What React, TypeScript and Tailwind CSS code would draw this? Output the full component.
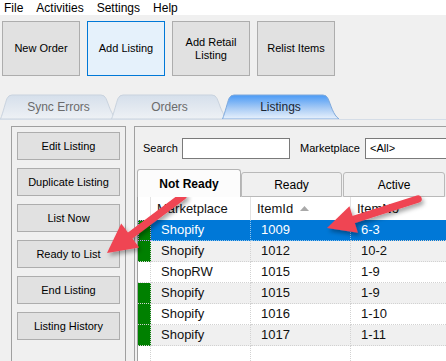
import React from 'react';

type Row = { market: string; id: string; item: string; flag: boolean };

const ROWS: Row[] = [
  { market: 'Shopify', id: '1009', item: '6-3', flag: true },
  { market: 'Shopify', id: '1012', item: '10-2', flag: true },
  { market: 'ShopRW', id: '1015', item: '1-9', flag: false },
  { market: 'Shopify', id: '1015', item: '1-9', flag: true },
  { market: 'Shopify', id: '1016', item: '1-10', flag: true },
  { market: 'Shopify', id: '1017', item: '1-11', flag: true },
];

const SIDE_BUTTONS = ['Edit Listing', 'Duplicate Listing', 'List Now', 'Ready to List', 'End Listing', 'Listing History'];

// Callout arrow: shaft line + triangular head, tip at (x2, y2).
function Arrow({ x1, y1, x2, y2, head = 28, half = 14 }: { x1: number; y1: number; x2: number; y2: number; head?: number; half?: number }) {
  const len = Math.hypot(x2 - x1, y2 - y1);
  const ux = (x2 - x1) / len;
  const uy = (y2 - y1) / len;
  const nx = -uy;
  const ny = ux;
  const bx = x2 - ux * head;
  const by = y2 - uy * head;
  const pts = [
    [bx + nx * half, by + ny * half],
    [x2, y2],
    [bx - nx * half, by - ny * half],
  ]
    .map((p) => p.join(','))
    .join(' ');
  return (
    <g filter="url(#shadow)">
      <line x1={x1} y1={y1} x2={bx + ux * 2} y2={by + uy * 2} stroke="#ef4452" strokeWidth={7.5} strokeLinecap="round" />
      <polygon points={pts} fill="#ef4452" />
    </g>
  );
}

function MainTab({ label, active }: { label: string; active?: boolean }) {
  const id = active ? 'tabOn' : 'tabOff';
  return (
    <div className="relative flex h-[25px] w-[111px] shrink-0 items-center justify-center">
      <svg className="absolute left-[-3px] top-0" width="118" height="25" viewBox="0 0 118 25">
        <path
          d="M0.5,25 C3,19 5.5,8 7,4.5 Q8.5,1 12,1 L101,1 Q104.5,1 106,4.5 C109,11 111,21 117,25 Z"
          fill={`url(#${id})`}
          stroke={active ? '#7ea9dc' : '#c9d3df'}
        />
      </svg>
      <span className={`relative text-[12px] ${active ? 'text-[#1b2633]' : 'text-[#6b6b6b]'}`}>{label}</span>
    </div>
  );
}

export default function App() {
  return (
    <div className="relative h-[361px] w-[446px] overflow-hidden bg-[#f0f0f0] font-['Liberation_Sans',Arial,sans-serif] text-black">
      <svg width="0" height="0" className="absolute">
        <defs>
          <linearGradient id="tabOff" x1="0" y1="0" x2="0" y2="1">
            <stop offset="0" stopColor="#d5dfeb" />
            <stop offset="1" stopColor="#eef1f5" />
          </linearGradient>
          <linearGradient id="tabOn" x1="0" y1="0" x2="0" y2="1">
            <stop offset="0" stopColor="#4a9af6" />
            <stop offset="0.55" stopColor="#a8cbf5" />
            <stop offset="1" stopColor="#e8f1fc" />
          </linearGradient>
        </defs>
      </svg>

      {/* menu bar */}
      <div className="flex h-[15px] items-center gap-[13px] bg-white pl-[4px] text-[12px] leading-none">
        <span>File</span>
        <span>Activities</span>
        <span>Settings</span>
        <span>Help</span>
      </div>

      {/* toolbar */}
      <div className="flex gap-[7px] pl-[2px] pt-[6px] text-[11px] leading-[13px]">
        <div className="flex h-[55px] w-[78px] items-center justify-center border border-[#adadad] bg-[#e1e1e1]">New Order</div>
        <div className="flex h-[55px] w-[78px] items-center justify-center border border-[#0078d7] bg-[#e5f1fb]">Add Listing</div>
        <div className="flex h-[55px] w-[78px] items-center justify-center border border-[#adadad] bg-[#e1e1e1] text-center">
          Add Retail
          <br />
          Listing
        </div>
        <div className="flex h-[55px] w-[78px] items-center justify-center border border-[#adadad] bg-[#e1e1e1]">Relist Items</div>
      </div>

      {/* main tabs */}
      <div className="mt-[18px] flex h-[25px] pl-[3px]">
        <MainTab label="Sync Errors" />
        <MainTab label="Orders" />
        <MainTab label="Listings" active />
      </div>
      <div className="h-px bg-[#d5dde7]" />

      <div className="mt-[6px] flex h-[235px]">
        {/* left command panel */}
        <div className="ml-[11px] flex w-[115px] shrink-0 flex-col gap-[8px] border-x border-t border-[#a0a0a0] px-[5px] pt-[5px]">
          {SIDE_BUTTONS.map((b) => (
            <div key={b} className="flex h-[28px] shrink-0 items-center justify-center border border-[#adadad] bg-[#e1e1e1] text-[11px]">
              {b}
            </div>
          ))}
        </div>

        {/* right panel */}
        <div className="ml-[8px] flex min-w-0 flex-1 flex-col overflow-hidden border-l border-t border-[#a0a0a0]">
          <div className="mt-[11px] flex h-[21px] items-center pl-[8px] text-[11px]">
            <span className="w-[39px] shrink-0">Search</span>
            <div className="h-[21px] w-[108px] shrink-0 border border-[#7a7a7a] bg-white" />
            <span className="ml-[10px] w-[65px] shrink-0">Marketplace</span>
            <div className="flex h-[21px] w-[100px] shrink-0 items-center border border-[#7a7a7a] bg-white pl-[4px]">&lt;All&gt;</div>
          </div>

          <div className="ml-[2px] mt-[10px] flex flex-1 flex-col">
            {/* sub tabs */}
            <div className="flex h-[28px] items-end text-[12px]">
              <div className="z-10 flex h-[28px] w-[104px] shrink-0 items-center justify-center rounded-t-[3px] border-x border-t border-[#b4b4b4] bg-[#fcfcfc] font-bold">
                Not Ready
              </div>
              <div className="flex h-[25px] w-[101px] shrink-0 items-center justify-center rounded-t-[3px] border border-[#b9b9b9] bg-[#f0f0f0]">Ready</div>
              <div className="ml-[1px] flex h-[25px] w-[102px] shrink-0 items-center justify-center rounded-t-[3px] border border-[#b9b9b9] bg-[#f0f0f0]">Active</div>
              <div className="ml-[1px] h-[25px] w-[20px] shrink-0 rounded-tl-[3px] border border-[#b9b9b9] bg-[#f0f0f0]" />
            </div>

            {/* grid */}
            <div className="flex flex-1 flex-col border-l border-[#a0a0a0] bg-white text-[13px] text-[#111]">
              <div className="flex h-[23px]">
                <div className="w-[13px] shrink-0 border-r border-[#e3e3e3]" />
                <div className="flex w-[100px] shrink-0 items-center border-r border-[#e3e3e3] pl-[6px]">Marketplace</div>
                <div className="flex w-[100px] shrink-0 items-center border-r border-[#e3e3e3] pl-[6px]">
                  ItemId
                  <svg className="ml-[7px]" width="9" height="5" viewBox="0 0 9 5">
                    <polygon points="0,5 4.5,0 9,5" fill="#a9a9a9" />
                  </svg>
                </div>
                <div className="flex flex-1 items-center pl-[6px]">ItemNo</div>
              </div>
              {ROWS.map((r, i) => {
                const sel = i === 0;
                const bg = sel ? 'bg-[#0078d7] text-white' : i % 2 === 1 ? 'bg-[#f0f0f0]' : 'bg-white';
                return (
                  <div key={i} className="flex h-[21px]">
                    <div
                      className={`w-[13px] shrink-0 border-r border-b border-dotted border-[#d2d2d2] ${r.flag ? 'bg-[#008000]' : 'bg-white'} ${sel ? 'outline-1 -outline-offset-1 outline-dotted outline-[#c08cff]' : ''}`}
                    />
                    <div className={`flex w-[100px] shrink-0 items-center border-b border-r border-dotted pl-[10px] ${sel ? 'border-[#ffffff90]' : 'border-[#d2d2d2]'} ${bg}`}>
                      {r.market}
                    </div>
                    <div className={`flex w-[100px] shrink-0 items-center border-b border-r border-dotted pl-[10px] ${sel ? 'border-[#ffffff90]' : 'border-[#d2d2d2]'} ${bg}`}>
                      {r.id}
                    </div>
                    <div className={`flex flex-1 items-center border-b border-dotted border-[#d2d2d2] pl-[10px] ${bg}`}>{r.item}</div>
                  </div>
                );
              })}
              <div className="flex flex-1">
                <div className="w-[13px] shrink-0 border-r border-dotted border-[#d2d2d2]" />
                <div className="w-[100px] shrink-0 border-r border-dotted border-[#d2d2d2]" />
                <div className="w-[100px] shrink-0 border-r border-dotted border-[#d2d2d2]" />
              </div>
            </div>
          </div>
        </div>
      </div>

      {/* callout arrows */}
      <svg className="pointer-events-none absolute left-0 top-0" width="446" height="361">
        <defs>
          <filter id="shadow" x="-20%" y="-20%" width="150%" height="160%">
            <feDropShadow dx="2" dy="3" stdDeviation="2" floodColor="#000" floodOpacity="0.35" />
          </filter>
        </defs>
        <Arrow x1={183} y1={196} x2={107} y2={253} head={29} half={15} />
        <Arrow x1={418} y1={199} x2={327} y2={228} head={28} half={14} />
      </svg>
    </div>
  );
}
